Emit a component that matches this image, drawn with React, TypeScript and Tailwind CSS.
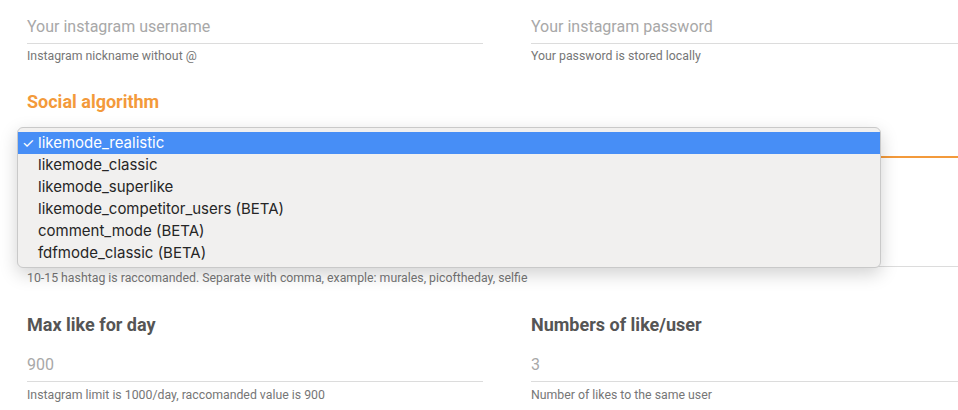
import React from "react";

const options = [
  "likemode_realistic",
  "likemode_classic",
  "likemode_superlike",
  "likemode_competitor_users (BETA)",
  "comment_mode (BETA)",
  "fdfmode_classic (BETA)",
];

function TextField({
  placeholder,
  helper,
  pt = "pt-[17px] pb-[6px]",
  hm = "mt-[4px]",
}: {
  placeholder: string;
  helper: string;
  pt?: string;
  hm?: string;
}) {
  return (
    <div>
      <div className={pt + " border-b border-[#dcdcdc] text-[16px] leading-[20px] text-[#a8a8a8]"}>
        {placeholder}
      </div>
      <div className={hm + " text-[12.3px] leading-[16px] text-[#767676]"}>{helper}</div>
    </div>
  );
}

export default function App() {
  return (
    <div className="relative w-[958px] h-[410px] overflow-hidden bg-white font-['Roboto',sans-serif]">
      <div className="pl-[27px] w-[1000px]">
        <div className="grid grid-cols-[456px_456px] gap-x-[48px]">
          <TextField placeholder="Your instagram username" helper="Instagram nickname without @" />
          <TextField placeholder="Your instagram password" helper="Your password is stored locally" />
        </div>

        <div className="mt-[26px] text-[18px] leading-[24px] font-bold text-[#f39a3b]">Social algorithm</div>
        <div className="h-[44px] border-b-2 border-[#f39a3b] w-[960px]"></div>

        <div className="w-[960px]">
          <div className="h-[109px] border-b border-[#dcdcdc]"></div>
          <div className="mt-[3px] text-[12.3px] leading-[16px] text-[#767676]">
            10-15 hashtag is raccomanded. Separate with comma, example: murales, picoftheday, selfie
          </div>
        </div>

        <div className="grid grid-cols-[456px_456px] gap-x-[48px] mt-[27px]">
          <div>
            <div className="text-[18px] leading-[24px] font-bold text-[#555]">Max like for day</div>
            <TextField placeholder="900" helper="Instagram limit is 1000/day, raccomanded value is 900" pt="pt-[18px] pb-[6px]" hm="mt-[5px]" />
          </div>
          <div>
            <div className="text-[18px] leading-[24px] font-bold text-[#555]">Numbers of like/user</div>
            <TextField placeholder="3" helper="Number of likes to the same user" pt="pt-[18px] pb-[6px]" hm="mt-[5px]" />
          </div>
        </div>
      </div>

      <div className="absolute left-[17px] top-[127px] w-[864px] h-[141px] rounded-[6px] border border-[#c9c9c9] bg-[#f1f0ef] shadow-[0_6px_18px_rgba(0,0,0,0.18)] pt-[4px] font-['Inter',sans-serif]">
        {options.map((o, i) => (
          <div
            key={o}
            className={
              "relative h-[22px] pl-[20px] text-[15px] leading-[22px] " +
              (i === 0 ? "bg-[#478ef6] text-white" : "text-[#262626]")
            }
          >
            {i === 0 && <span className="absolute left-[4px] top-0 text-[14px]">✓</span>}
            {o}
          </div>
        ))}
      </div>
    </div>
  );
}
